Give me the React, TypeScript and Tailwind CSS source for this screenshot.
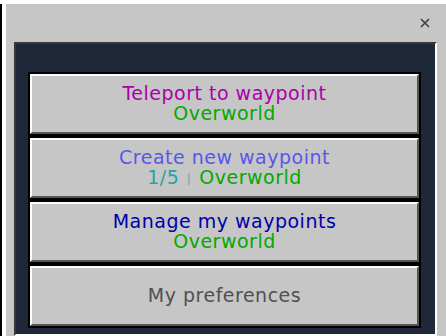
import React from "react";

const font = { fontFamily: '"DejaVu Sans", "Liberation Sans", sans-serif' };

function McButton({ children }: { children: React.ReactNode }) {
  return (
    <div className="h-[64px] border-2 border-black">
      <div className="flex h-full flex-col items-center justify-center border-2 border-t-white border-l-white border-b-[#555555] border-r-[#555555] bg-[#c6c6c6] pb-[2px] text-[19px] leading-[20px] tracking-[0.5px]">
        {children}
      </div>
    </div>
  );
}

export default function App() {
  return (
    <div className="flex h-[336px] w-[446px] overflow-hidden bg-white pt-[4px]" style={font}>
      <div className="w-[2px] bg-black" />
      <div className="w-[4px]" />
      <div className="flex flex-1 flex-col bg-[#c6c6c6]">
        {/* title bar with close */}
        <div className="flex h-[38px] justify-end pr-[16px] pt-[14px]">
          <svg width="10" height="10" viewBox="0 0 10 10" className="text-[#3f3f3f]">
            <path d="M1 1L9 9M9 1L1 9" stroke="currentColor" strokeWidth="1.6" />
          </svg>
        </div>

        {/* inset slot */}
        <div className="ml-[8px] mr-[9px] flex-1 border-2 border-t-[#373737] border-l-[#373737] border-r-white border-b-white bg-[#1f2838] pl-[12px] pr-[14px] pt-[28px]">
          <McButton>
            <span className="text-[#aa00aa]">Teleport to waypoint</span>
            <span className="text-[#00aa00]">Overworld</span>
          </McButton>
          <McButton>
            <span className="text-[#5858e6]">Create new waypoint</span>
            <span className="flex items-center gap-[9px]">
              <span className="text-[#1fa6a6]">1/5</span>
              <span className="mt-[4px] h-[12px] w-[2px] bg-[#ababab]" />
              <span className="text-[#00aa00]">Overworld</span>
            </span>
          </McButton>
          <McButton>
            <span className="text-[#0000aa]">Manage my waypoints</span>
            <span className="text-[#00aa00]">Overworld</span>
          </McButton>
          <McButton>
            <span className="text-[#505050]">My preferences</span>
          </McButton>
        </div>
      </div>
    </div>
  );
}
